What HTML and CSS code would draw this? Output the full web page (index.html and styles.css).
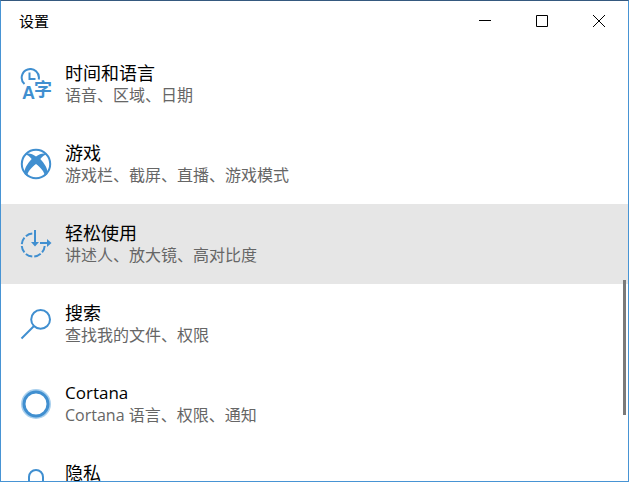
FILE: index.html
```html
<!DOCTYPE html>
<html lang="zh-CN">
<head>
    <meta charset="UTF-8">
    <meta name="viewport" content="width=device-width, initial-scale=1.0">
    <title>设置</title>
    <link rel="stylesheet" href="styles.css">
</head>
<body>
    <div class="window">
        <header class="titlebar">
            <h1>设置</h1>
            <div class="window-buttons">
                <button type="button" aria-label="最小化">
                    <svg viewBox="0 0 12 12"><path d="M0 5.5h12"/></svg>
                </button>
                <button type="button" aria-label="最大化">
                    <svg viewBox="0 0 12 12"><path d="M.5.5h11v11H.5z"/></svg>
                </button>
                <button type="button" aria-label="关闭">
                    <svg viewBox="0 0 12 12"><path d="M0 0l12 12M12 0L0 12"/></svg>
                </button>
            </div>
        </header>

        <main class="content">
            <nav class="category-list">
                <a href="#" class="category">
                    <svg class="icon" viewBox="0 0 32 32">
                        <path d="M4.500 16A8.600 8.600 0 1 1 18.700 11.500"/>
                        <path class="hands" d="M9.500 4.500V11h6"/>
                        <text class="letter" x="2" y="31">A</text>
                        <text class="hanzi" x="14" y="28">字</text>
                    </svg>
                    <span class="text">
                        <span class="name">时间和语言</span>
                        <span class="desc">语音、区域、日期</span>
                    </span>
                </a>
                <a href="#" class="category">
                    <svg class="icon" viewBox="0 0 32 32">
                        <circle cx="16" cy="16" r="14.2"/>
                        <path class="solid" d="M5.500 6.500C8 4.300 12 5.700 16 8.600C20 5.700 24 4.300 26.500 6.500C24.500 6.800 22 8.800 20.300 11C24.500 15.500 28.200 21 27.500 26L25 28C24.500 24 20.500 19.500 16 16C11.500 19.500 7.500 24 7 28L4.500 26C3.800 21 7.500 15.500 11.700 11C10 8.800 7.500 6.800 5.500 6.500z"/>
                    </svg>
                    <span class="text">
                        <span class="name">游戏</span>
                        <span class="desc">游戏栏、截屏、直播、游戏模式</span>
                    </span>
                </a>
                <a href="#" class="category active">
                    <svg class="icon" viewBox="0 0 32 32">
                        <path class="dashed" d="M24.700 18A11.500 11.500 0 1 1 12.500 5.600"/>
                        <path d="M15 2v14M20 15h8"/>
                        <path class="solid" d="M11 14h8l-4 4.500zM27 11v8l4.500-4z"/>
                    </svg>
                    <span class="text">
                        <span class="name">轻松使用</span>
                        <span class="desc">讲述人、放大镜、高对比度</span>
                    </span>
                </a>
                <a href="#" class="category">
                    <svg class="icon" viewBox="0 0 32 32">
                        <circle cx="20.600" cy="11.400" r="9.400"/>
                        <path d="M14 18L1.500 30.500"/>
                    </svg>
                    <span class="text">
                        <span class="name">搜索</span>
                        <span class="desc">查找我的文件、权限</span>
                    </span>
                </a>
                <a href="#" class="category">
                    <svg class="icon" viewBox="0 0 32 32">
                        <circle class="halo" cx="16" cy="16" r="14"/>
                        <circle class="ring" cx="16" cy="16" r="12"/>
                    </svg>
                    <span class="text">
                        <span class="name latin">Cortana</span>
                        <span class="desc">Cortana 语言、权限、通知</span>
                    </span>
                </a>
                <a href="#" class="category">
                    <svg class="icon" viewBox="0 0 32 32">
                        <path d="M9 15V9a7 7 0 0 1 14 0v6M5 15h22v15H5z"/>
                    </svg>
                    <span class="text">
                        <span class="name">隐私</span>
                    </span>
                </a>
            </nav>
            <div class="scroll-thumb"></div>
        </main>
    </div>
</body>
</html>
```

FILE: styles.css
```css
* {
    box-sizing: border-box;
}
body {
    margin: 0;
    font-family: "Open Sans", "Noto Sans CJK SC", sans-serif;
    background-color: #ffffff;
    color: #000000;
}
.window {
    display: flex;
    flex-direction: column;
    height: 100vh;
    border: 1px solid #4794d4;
    border-top-color: #35597f;
    overflow: hidden;
}
.titlebar {
    display: flex;
    justify-content: space-between;
    flex: none;
    height: 43px;
    padding: 0 1px 0 18px;
}
.titlebar h1 {
    margin: 0;
    font-size: 15px;
    font-weight: 400;
    line-height: 40px;
}
.window-buttons {
    display: flex;
}
.window-buttons button {
    display: flex;
    align-items: center;
    justify-content: center;
    width: 57px;
    height: 40px;
    padding: 0;
    border: none;
    background: none;
}
.window-buttons button:hover {
    background-color: #e5e5e5;
}
.window-buttons svg {
    width: 12px;
    height: 12px;
    fill: none;
    stroke: #000000;
    stroke-width: 1;
}
.content {
    position: relative;
    flex: 1;
    min-height: 0;
    overflow: hidden;
}
.category {
    display: flex;
    align-items: flex-start;
    gap: 13px;
    height: 80px;
    padding: 0 19px;
    color: inherit;
    text-decoration: none;
}
.category:hover,
.category.active {
    background-color: #e6e6e6;
}
.icon {
    flex: none;
    width: 32px;
    height: 32px;
    margin-top: 24px;
    fill: none;
    stroke: #408fd0;
    stroke-width: 2;
}
.icon .solid,
.icon text {
    fill: #408fd0;
    stroke: none;
}
.icon .letter {
    font-family: "Liberation Sans", sans-serif;
    font-size: 18px;
    font-weight: 700;
}
.icon .hanzi {
    font-size: 18px;
    font-weight: 700;
}
.icon .dashed {
    stroke-dasharray: 7 2;
}
.icon .halo {
    stroke: #a9d0ee;
}
.icon .ring {
    stroke-width: 3;
}
.text {
    display: flex;
    flex-direction: column;
    padding-top: 18px;
}
.name {
    font-size: 18px;
    line-height: 22px;
}
.name.latin {
    font-size: 17px;
}
.desc {
    font-size: 16px;
    line-height: 22px;
    color: #666666;
}
.scroll-thumb {
    position: absolute;
    top: 54%;
    right: 2px;
    width: 3px;
    height: 31%;
    background-color: #7a7a7a;
}
```
